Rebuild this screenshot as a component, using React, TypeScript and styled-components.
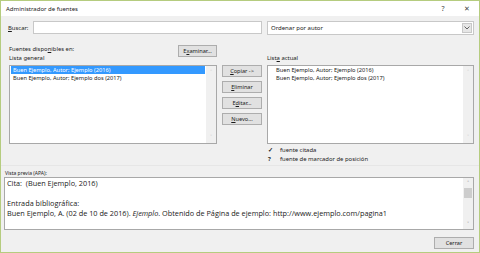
import React from "react";
import styled, { createGlobalStyle } from "styled-components";

const Global = createGlobalStyle`
  html, body { margin: 0; padding: 0; background: #ffffff; }
  * { box-sizing: border-box; }
`;

const Window = styled.div`
  width: 480px;
  height: 253px;
  border: 1px solid #b5cc7f;
  background: #f0f0f0;
  font-family: "Noto Sans", "Open Sans", sans-serif;
  font-size: 5.9px;
  color: #1a1a1a;
  display: flex;
  flex-direction: column;
  overflow: hidden;
`;

const TitleBar = styled.div`
  height: 15px;
  background: #ffffff;
  display: flex;
  align-items: center;
  padding-left: 5px;
  font-size: 6px;
  color: #222;
`;

const TitleText = styled.span`
  flex: 1;
`;

const TitleBtn = styled.span<{ $w: number }>`
  width: ${(p) => p.$w}px;
  text-align: center;
  font-size: 7px;
  color: #444;
`;

const Grid = styled.div`
  display: grid;
  grid-template-columns: 20px 184px 40px 207px;
  column-gap: 5px;
  padding: 5px 5px 0 7px;
`;

const Label = styled.span`
  line-height: 9px;
  white-space: nowrap;
`;

const SearchLabel = styled(Label)`
  align-self: center;
`;

const Input = styled.div`
  grid-column: 2 / span 2;
  height: 13px;
  background: #fff;
  border: 1px solid #c8c8c8;
`;

const Select = styled.div`
  height: 14px;
  background: #fff;
  border: 1px solid #c8c8c8;
  display: flex;
  align-items: center;
  padding-left: 3px;
  font-size: 6px;
`;

const SelectText = styled.span`
  flex: 1;
`;

const SelectArrow = styled.span`
  width: 10px;
  height: 10px;
  margin-right: 1px;
  border: 1px solid #c8c8c8;
  background: #e6e6e6;
  display: flex;
  align-items: center;
  justify-content: center;
`;

const LeftHead = styled.div`
  grid-column: 1 / span 2;
  display: flex;
  justify-content: space-between;
  align-items: flex-start;
  padding-top: 10px;
  padding-left: 1px;
  margin-bottom: 1px;
`;

const Stack = styled.div`
  display: flex;
  flex-direction: column;
`;

const RightHead = styled.div`
  grid-column: 4;
  display: flex;
  align-items: flex-end;
  padding-bottom: 1px;
`;

const Button = styled.div<{ $w?: number }>`
  width: ${(p) => (p.$w ? `${p.$w}px` : "100%")};
  height: 12px;
  background: #e1e1e1;
  border: 1px solid #adadad;
  display: flex;
  align-items: center;
  justify-content: center;
  font-size: 5.6px;
  white-space: nowrap;
`;

const ListBox = styled.div<{ $span?: boolean }>`
  grid-column: ${(p) => (p.$span ? "1 / span 2" : "auto")};
  height: 79px;
  margin-top: 1px;
  margin-left: ${(p) => (p.$span ? "1px" : "0")};
  background: #fff;
  border: 1px solid #a8a8a8;
  display: flex;
`;

const ListItems = styled.div<{ $indent: number }>`
  flex: 1;
  padding: 0 1px 0 ${(p) => p.$indent}px;
  display: flex;
  flex-direction: column;
  font-size: 5.7px;
`;

const Item = styled.div<{ $sel?: boolean }>`
  height: 8px;
  line-height: 8px;
  padding-left: 2px;
  white-space: nowrap;
  background: ${(p) => (p.$sel ? "#3399ff" : "transparent")};
  color: ${(p) => (p.$sel ? "#fff" : "#1a1a1a")};
`;

const ScrollBar = styled.div`
  width: 10px;
  background: #f0f0f0;
  display: flex;
  flex-direction: column;
  justify-content: space-between;
  align-items: center;
  color: #c4c4c4;
  font-size: 6px;
  padding: 2px 0;
`;

const ButtonCol = styled.div`
  display: flex;
  flex-direction: column;
  gap: 4px;
  margin-top: 1px;
`;

const Legend = styled.div`
  grid-column: 4;
  padding: 2px 0 0 1px;
  display: flex;
  flex-direction: column;
`;

const LegendRow = styled.div`
  display: flex;
  line-height: 9px;
  font-size: 5.9px;
`;

const Mark = styled.span`
  width: 12px;
  font-weight: bold;
`;

const Preview = styled.div`
  margin-top: 1px;
  border-top: 1px solid #e6e6e6;
  padding: 3px 5px 0 3px;
  display: flex;
  flex-direction: column;
`;

const PreviewLabel = styled.span`
  font-size: 5px;
  line-height: 8px;
  padding-left: 1px;
`;

const PreviewBox = styled.div`
  height: 53px;
  background: #fff;
  border: 1px solid #a8a8a8;
  display: flex;
  font-family: "Open Sans", "Noto Sans", sans-serif;
  font-size: 7.3px;
`;

const PreviewText = styled.div`
  flex: 1;
  padding: 0 2px;
  line-height: 10px;
  white-space: nowrap;
`;

const PScroll = styled.div`
  width: 10px;
  background: #f0f0f0;
  display: flex;
  flex-direction: column;
  align-items: center;
  color: #777;
  font-size: 6px;
  padding: 1px 0;
`;

const Thumb = styled.div`
  width: 8px;
  height: 10px;
  background: #cdcdcd;
  margin-top: 1px;
`;

const Spacer = styled.div`
  flex: 1;
`;

const Footer = styled.div`
  display: flex;
  justify-content: flex-end;
  padding: 7px 0 0 0;
`;

const U = styled.span`
  text-decoration: underline;
`;

export default function App() {
  return (
    <>
      <Global />
      <Window>
        <TitleBar>
          <TitleText>Administrador de fuentes</TitleText>
          <TitleBtn $w={24}>?</TitleBtn>
          <TitleBtn $w={24}>✕</TitleBtn>
        </TitleBar>
        <Grid>
          <SearchLabel>
            <U>B</U>uscar:
          </SearchLabel>
          <Input />
          <Select>
            <SelectText>Ordenar por autor</SelectText>
            <SelectArrow>
              <svg width="6" height="4" viewBox="0 0 6 4">
                <path d="M0.5 0.5 L3 3 L5.5 0.5" fill="none" stroke="#555" strokeWidth="0.9" />
              </svg>
            </SelectArrow>
          </Select>

          <LeftHead>
            <Stack>
              <Label>
                Fuentes dispo<U>n</U>ibles en:
              </Label>
              <Label>Lista general</Label>
            </Stack>
            <Button $w={39}>
              E<U>x</U>aminar...
            </Button>
          </LeftHead>
          <div />
          <RightHead>
            <Label>
              List<U>a</U> actual
            </Label>
          </RightHead>

          <ListBox $span>
            <ListItems $indent={1}>
              <Item $sel>Buen Ejemplo, Autor; Ejemplo (2016)</Item>
              <Item>Buen Ejemplo, Autor; Ejemplo dos (2017)</Item>
            </ListItems>
            <ScrollBar>
              <span>˄</span>
              <span>˅</span>
            </ScrollBar>
          </ListBox>
          <ButtonCol>
            <Button>
              <U>C</U>opiar -&gt;
            </Button>
            <Button>
              <U>E</U>liminar
            </Button>
            <Button>
              E<U>d</U>itar...
            </Button>
            <Button>
              <U>N</U>uevo...
            </Button>
          </ButtonCol>
          <ListBox>
            <ListItems $indent={6}>
              <Item>Buen Ejemplo, Autor; Ejemplo (2016)</Item>
              <Item>Buen Ejemplo, Autor; Ejemplo dos (2017)</Item>
            </ListItems>
            <ScrollBar>
              <span>˄</span>
              <span>˅</span>
            </ScrollBar>
          </ListBox>

          <Legend>
            <LegendRow>
              <Mark>✓</Mark>fuente citada
            </LegendRow>
            <LegendRow>
              <Mark>?</Mark>fuente de marcador de posición
            </LegendRow>
          </Legend>
        </Grid>
        <Preview>
          <PreviewLabel>Vista previa (APA):</PreviewLabel>
          <PreviewBox>
            <PreviewText>
              <div>Cita:&nbsp; (Buen Ejemplo, 2016)</div>
              <div>&nbsp;</div>
              <div>Entrada bibliográfica:</div>
              <div>
                Buen Ejemplo, A. (02 de 10 de 2016). <i>Ejemplo</i>. Obtenido de Página de ejemplo:
                http://www.ejemplo.com/pagina1
              </div>
            </PreviewText>
            <PScroll>
              <span>˄</span>
              <Thumb />
              <Spacer />
              <span>˅</span>
            </PScroll>
          </PreviewBox>
          <Footer>
            <Button $w={40}>Cerrar</Button>
          </Footer>
        </Preview>
      </Window>
    </>
  );
}
